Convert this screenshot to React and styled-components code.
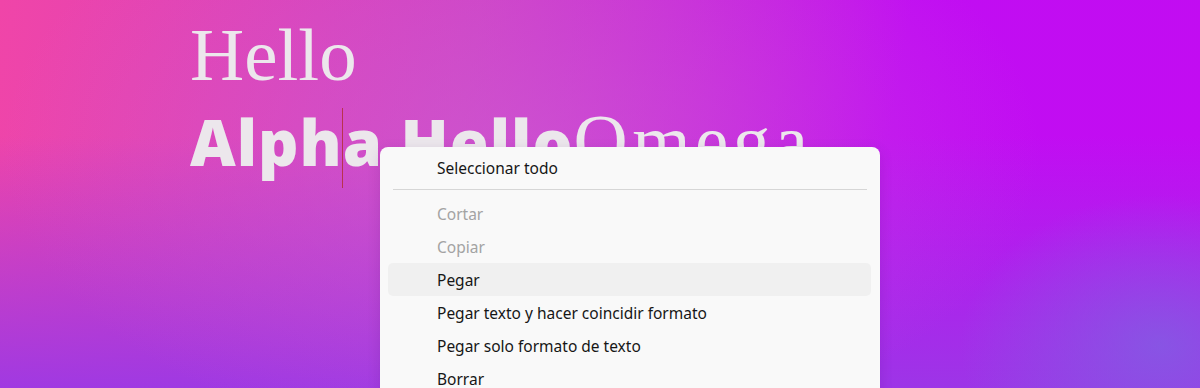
import React from "react";
import styled, { createGlobalStyle } from "styled-components";

const Global = createGlobalStyle`
  html, body { margin: 0; padding: 0; }
  body { width: 1200px; height: 388px; overflow: hidden; }
`;

const Page = styled.div`
  position: relative;
  width: 1200px;
  height: 388px;
  overflow: hidden;
  box-sizing: border-box;
  padding: 17px 0 0 190px;
  background:
    radial-gradient(200px 150px at 1160px 345px, rgba(125, 100, 226, 0.7), rgba(125, 100, 226, 0)),
    radial-gradient(520px 300px at 520px 150px, rgba(205, 100, 210, 0.55), rgba(205, 100, 210, 0)),
    linear-gradient(180deg, rgba(150, 55, 228, 0) 35%, rgba(154, 56, 230, 0.92) 100%),
    linear-gradient(100deg, #f045a8 0%, #cf3fc6 38%, #c10df2 72%, #c20cf2 100%);
`;

const SerifLine = styled.div`
  font-family: "Liberation Serif", "Times New Roman", serif;
  font-size: 75px;
  line-height: 75px;
  color: #ece7ec;
  white-space: nowrap;
`;

const MixedLine = styled(SerifLine)`
  margin-top: 11px;
`;

const Bold = styled.span`
  font-family: "Open Sans", "Noto Sans", sans-serif;
  font-weight: 800;
  font-size: 63px;
  letter-spacing: 1px;
`;

const Wide = styled.span`
  letter-spacing: 4.5px;
`;

const Caret = styled.span`
  display: inline-block;
  width: 1px;
  height: 80px;
  margin: 0 -0.5px;
  background: #b8334f;
  vertical-align: -22px;
`;

const Menu = styled.div`
  position: absolute;
  left: 380px;
  top: 147px;
  width: 500px;
  box-sizing: border-box;
  padding: 4px 8px 0 8px;
  background: #f9f9f9;
  border-radius: 8px;
  box-shadow: 0 4px 14px rgba(60, 0, 90, 0.14);
  font-family: "Noto Sans", "Open Sans", sans-serif;
  font-size: 15.5px;
`;

const Item = styled.div`
  height: 33px;
  display: flex;
  align-items: center;
  padding-left: 49px;
  border-radius: 5px;
  color: ${(p) => (p.$disabled ? "#a3a3a3" : "#161616")};
  background: ${(p) => (p.$hover ? "#f0f0f0" : "transparent")};
  margin-right: ${(p) => (p.$hover ? "1px" : "0")};
`;

const Separator = styled.div`
  height: 1px;
  margin: 5px 5px 7px 5px;
  background: #d6d6d6;
`;

const items = [
  { label: "Cortar", disabled: true },
  { label: "Copiar", disabled: true },
  { label: "Pegar", hover: true },
  { label: "Pegar texto y hacer coincidir formato" },
  { label: "Pegar solo formato de texto" },
  { label: "Borrar" },
];

export default function App() {
  return (
    <>
      <Global />
      <Page>
        <SerifLine>Hello</SerifLine>
        <MixedLine>
          <Bold>
            Alph
            <Caret />a Hello
          </Bold>
          <Wide>Omega</Wide>
        </MixedLine>
        <Menu>
          <Item>Seleccionar todo</Item>
          <Separator />
          {items.map((it) => (
            <Item key={it.label} $disabled={it.disabled} $hover={it.hover}>
              {it.label}
            </Item>
          ))}
        </Menu>
      </Page>
    </>
  );
}
